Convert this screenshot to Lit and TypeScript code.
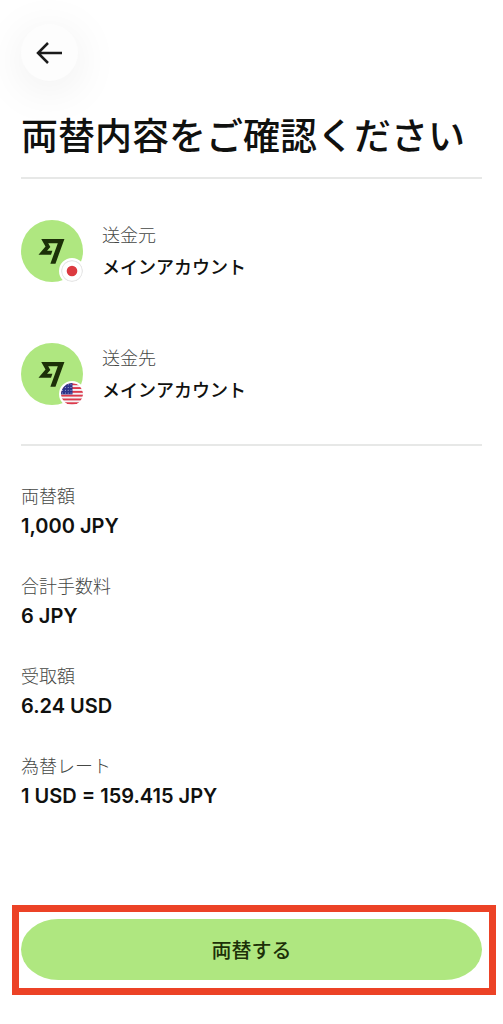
import { LitElement, html, svg, css } from "lit";
import { customElement, property } from "lit/decorators.js";

const usFlag = svg`
  <rect width="22" height="22" fill="#f4f3f5"/>
  ${[0, 1, 2, 3, 4, 5].map((i) => svg`<rect y=${i * 3.8 + 0.3} width="22" height="1.9" fill="#dc3a4c"/>`)}
  <rect width="11.5" height="11.4" fill="#2c3389"/>
  ${[0, 1, 2, 3].map((r) =>
    [0, 1, 2, 3].map((c) => svg`<circle cx=${1.6 + c * 2.8} cy=${1.8 + r * 2.7} r=".5" fill="#c3c5e6"/>`)
  )}
`;

const jpFlag = svg`
  <rect width="22" height="22" fill="#fff"/>
  <circle cx="11" cy="11" r="10.4" fill="none" stroke="#e6e6e6" stroke-width="1.2"/>
  <circle cx="11" cy="11" r="5.3" fill="#dc3a40"/>
`;

@customElement("account-row")
class AccountRow extends LitElement {
  @property() label = "";
  @property() name = "";
  @property() flag = "jp";

  static styles = css`
    :host {
      display: flex;
      align-items: center;
      gap: 19px;
      height: 62px;
    }
    .avatar {
      position: relative;
      width: 62px;
      height: 62px;
      flex: none;
      border-radius: 50%;
      background: #afe780;
    }
    .logo {
      display: block;
      width: 62px;
      height: 62px;
    }
    .badge {
      position: absolute;
      right: -2px;
      bottom: -2px;
      width: 26px;
      height: 26px;
      box-sizing: border-box;
      border: 2px solid #fff;
      border-radius: 50%;
      background: #fff;
      overflow: hidden;
    }
    .badge svg {
      display: block;
      width: 22px;
      height: 22px;
      border-radius: 50%;
    }
    .text {
      padding-top: 2px;
    }
    .label,
    .name {
      font-size: 18px;
      line-height: 32px;
    }
    .label {
      color: #454745;
      font-weight: 300;
    }
    .name {
      color: #10110f;
      font-weight: 500;
    }
  `;

  render() {
    return html`
      <div class="avatar">
        <svg class="logo" viewBox="0 0 62 62" aria-hidden="true">
          <path
            transform="translate(17.5 18.4) scale(1.08)"
            fill="#1c3008"
            d="M6.488 7.469 0 15.05h11.585l1.301-3.576H7.922l3.033-3.507.01-.092L8.993 4.48h8.873l-6.878 18.925h4.706L24 .595H2.543z"
          />
        </svg>
        <div class="badge">
          <svg viewBox="0 0 22 22" aria-hidden="true">${this.flag === "us" ? usFlag : jpFlag}</svg>
        </div>
      </div>
      <div class="text">
        <div class="label">${this.label}</div>
        <div class="name">${this.name}</div>
      </div>
    `;
  }
}

@customElement("app-root")
class AppRoot extends LitElement {
  static styles = css`
    :host {
      display: flex;
      flex-direction: column;
      box-sizing: border-box;
      min-height: 100vh;
      padding: 24px 0 29px;
      background: #fff;
      color: #10110f;
      font-family: Inter, "Noto Sans CJK JP", sans-serif;
    }
    main {
      padding: 0 21px;
    }
    .back {
      display: flex;
      align-items: center;
      justify-content: center;
      width: 57px;
      height: 57px;
      padding: 0;
      border: 0;
      border-radius: 50%;
      background: #fdfdfd;
      box-shadow: 0 8px 48px rgba(0, 0, 0, 0.08);
      cursor: pointer;
    }
    .back svg {
      width: 28px;
      height: 24px;
    }
    h1 {
      margin: 28px 0 12px;
      font-size: 37px;
      line-height: 56px;
      font-weight: 500;
      white-space: nowrap;
    }
    hr {
      height: 2px;
      margin: 0;
      border: 0;
      background: #e7e8e7;
    }
    .accounts {
      display: flex;
      flex-direction: column;
      gap: 61px;
      padding: 41px 0 39px;
    }
    dl {
      display: flex;
      flex-direction: column;
      gap: 32px;
      margin: 0;
      padding: 36px 0 40px;
    }
    dt {
      font-size: 18px;
      line-height: 30px;
      font-weight: 300;
      color: #454745;
    }
    dd {
      margin: 0;
      font-size: 20px;
      line-height: 28px;
      font-weight: 600;
    }
    footer {
      margin: auto 7px 0 12px;
      padding: 7px 7px 8px 2px;
      border: 7px solid #ec4226;
    }
    .submit {
      display: block;
      width: 100%;
      height: 61px;
      padding: 0;
      border: 0;
      border-radius: 38px / 31px;
      background: #afe780;
      color: #1c3008;
      font: inherit;
      font-size: 20px;
      font-weight: 500;
      cursor: pointer;
    }
  `;

  private details = [
    ["両替額", "1,000 JPY"],
    ["合計手数料", "6 JPY"],
    ["受取額", "6.24 USD"],
    ["為替レート", "1 USD = 159.415 JPY"],
  ];

  render() {
    return html`
      <main lang="ja">
        <button class="back" type="button" aria-label="戻る">
          <svg viewBox="0 0 28 24" fill="none" stroke="#1b1b1b" stroke-width="2.5" aria-hidden="true">
            <path d="M26 12H2M12 2L2 12L12 22" />
          </svg>
        </button>
        <h1>両替内容をご確認ください</h1>
        <hr />
        <section class="accounts">
          <account-row label="送金元" name="メインアカウント" flag="jp"></account-row>
          <account-row label="送金先" name="メインアカウント" flag="us"></account-row>
        </section>
        <hr />
        <dl>
          ${this.details.map(([k, v]) => html`<div><dt>${k}</dt><dd>${v}</dd></div>`)}
        </dl>
      </main>
      <footer lang="ja">
        <button class="submit" type="button">両替する</button>
      </footer>
    `;
  }
}
